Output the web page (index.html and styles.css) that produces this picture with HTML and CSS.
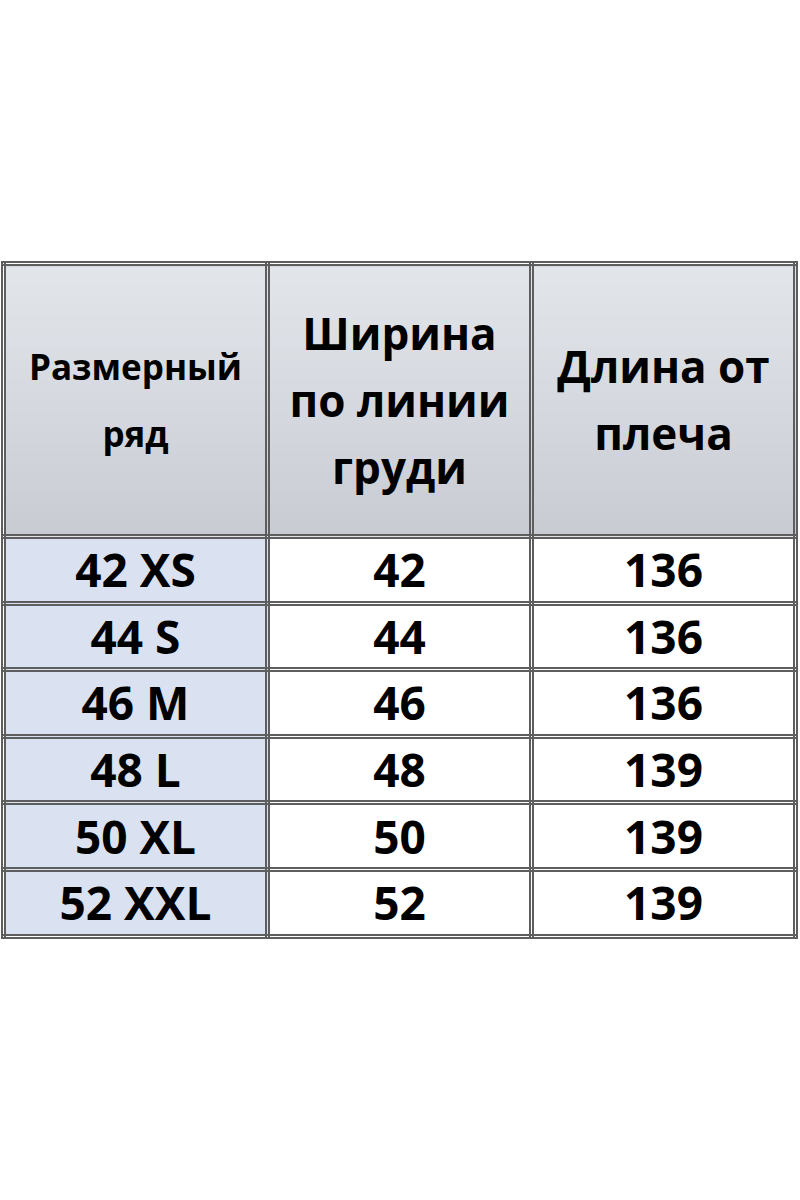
FILE: index.html
```html
<!DOCTYPE html>
<html lang="ru">
<head>
<meta charset="utf-8">
<title>Размерная сетка</title>
<link rel="stylesheet" href="styles.css">
</head>
<body>
<div class="page">
  <table class="sizes">
    <tr class="head">
      <td class="h-small">Размерный<br>ряд</td>
      <td class="h-big">Ширина<br>по линии<br>груди</td>
      <td class="h-big">Длина от<br>плеча</td>
    </tr>
    <tr><td class="size">42 XS</td><td>42</td><td>136</td></tr>
    <tr><td class="size">44 S</td><td>44</td><td>136</td></tr>
    <tr><td class="size">46 M</td><td>46</td><td>136</td></tr>
    <tr><td class="size">48 L</td><td>48</td><td>139</td></tr>
    <tr><td class="size">50 XL</td><td>50</td><td>139</td></tr>
    <tr><td class="size">52 XXL</td><td>52</td><td>139</td></tr>
  </table>
</div>
</body>
</html>
```

FILE: styles.css
```css
html, body {
  margin: 0;
  padding: 0;
  background: #ffffff;
}
.page {
  width: 800px;
  height: 1200px;
  padding-top: 261px;
  padding-left: 1px;
  box-sizing: border-box;
}
.sizes {
  width: 797px;
  border-collapse: collapse;
  table-layout: fixed;
  font-family: "Open Sans", "Liberation Sans", sans-serif;
  font-weight: 700;
  color: #000;
}
.sizes td {
  border: 5px double #5e5e5e;
  text-align: center;
  vertical-align: middle;
  padding: 0;
  height: 61.6px;
  font-size: 46px;
  line-height: 61px;
  background: #ffffff;
}
.sizes td.size {
  background: #dae2f1;
}
.sizes .head td {
  height: 268px;
  background: linear-gradient(to bottom, #e2e5ea 0%, #d3d6dc 60%, #c8cbd1 100%);
}
.sizes .head td.h-small {
  font-size: 35px;
  line-height: 67px;
}
.sizes .head td.h-big {
  font-size: 44px;
  line-height: 67px;
}
```
